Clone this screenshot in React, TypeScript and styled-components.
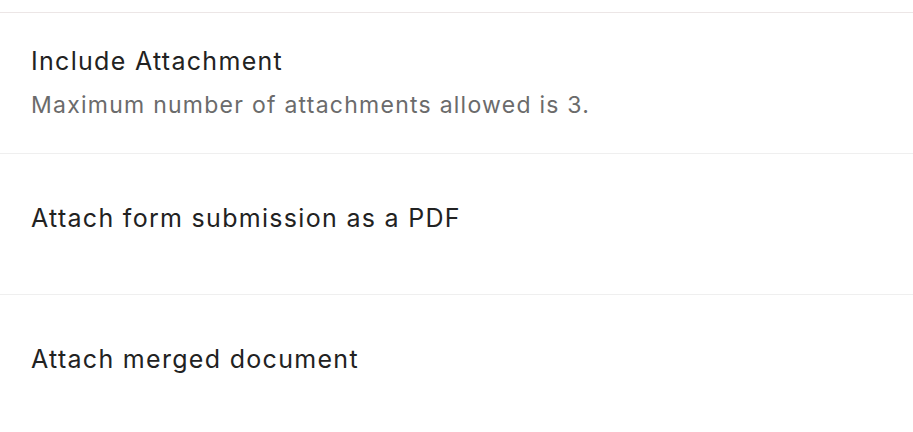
import React from 'react'
import styled, { createGlobalStyle } from 'styled-components'

const GlobalStyle = createGlobalStyle`
  html, body {
    margin: 0;
    padding: 0;
    background: #ffffff;
  }
  body {
    font-family: Inter, "Noto Sans", "Liberation Sans", sans-serif;
    -webkit-font-smoothing: antialiased;
  }
`

const Panel = styled.section`
  padding-top: 12px;
`

const List = styled.div`
  border-top: 1px solid #ece6e6;
`

const Row = styled.div<{ $top: number }>`
  display: flex;
  flex-direction: column;
  height: 141px;
  box-sizing: border-box;
  padding: ${({ $top }) => $top}px 31px 0;
  border-bottom: 1px solid #efefef;

  &:last-child {
    border-bottom: none;
  }
`

const Title = styled.div`
  font-size: 25px;
  line-height: 30px;
  color: #222222;
  letter-spacing: 1.3px;
`

const Hint = styled.div`
  margin-top: 16px;
  font-size: 23px;
  line-height: 27px;
  color: #6b6b6b;
  letter-spacing: 1.25px;
`

const OPTIONS = [
  { title: 'Include Attachment', hint: 'Maximum number of attachments allowed is 3.' },
  { title: 'Attach form submission as a PDF' },
  { title: 'Attach merged document' },
]

const App: React.FC = () => {
  return (
    <>
      <GlobalStyle />
      <Panel>
        <List>
          {OPTIONS.map((o) => (
            <Row key={o.title} $top={o.hint ? 33 : 49}>
              <Title>{o.title}</Title>
              {o.hint && <Hint>{o.hint}</Hint>}
            </Row>
          ))}
        </List>
      </Panel>
    </>
  )
}

export default App
